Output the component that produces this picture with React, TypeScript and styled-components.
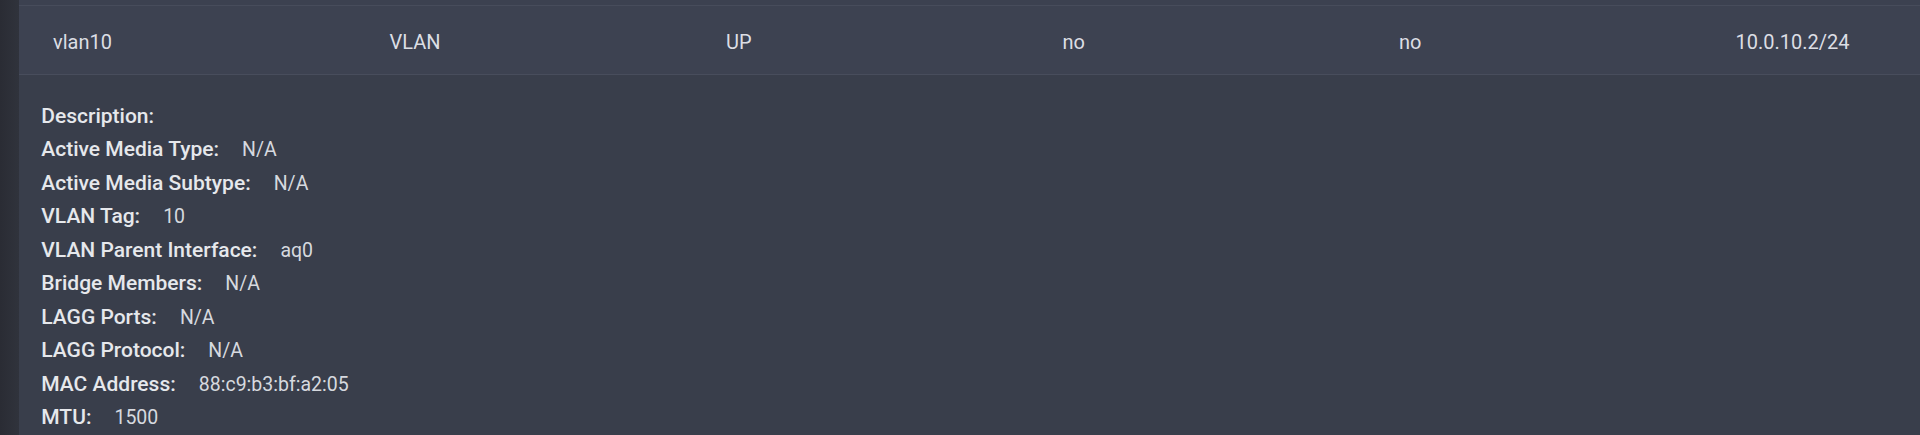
import React from "react";
import styled, { createGlobalStyle } from "styled-components";

const GlobalStyle = createGlobalStyle`
  html, body {
    margin: 0;
    padding: 0;
    background: #393e4b;
  }
  body {
    font-family: Roboto, "Noto Sans", "Liberation Sans", sans-serif;
    -webkit-font-smoothing: antialiased;
  }
`;

const Page = styled.div`
  display: flex;
  width: 1920px;
  height: 435px;
  overflow: hidden;
`;

const SideStrip = styled.div`
  flex: 0 0 19px;
  background: linear-gradient(90deg, #2a2c34 0%, #30333c 100%);
`;

const Main = styled.div`
  flex: 1;
  display: flex;
  flex-direction: column;
  min-width: 0;
  background: #393e4b;
`;

const PrevRowEdge = styled.div`
  height: 5px;
  background: #3c4150;
  border-bottom: 1px solid #474c5b;
`;

const Row = styled.div`
  display: grid;
  grid-template-columns: repeat(6, 336.5px);
  height: 69px;
  box-sizing: border-box;
  padding: 24px 0 21px 34px;
  background: #3d4251;
  border-bottom: 1px solid #484d5c;
`;

const Cell = styled.div`
  font-size: 20px;
  line-height: 24px;
  font-weight: 400;
  color: #dcdee4;
  white-space: nowrap;
`;

const Details = styled.div`
  display: flex;
  flex-direction: column;
  padding: 24.9px 0 0 22.3px;
`;

const DetailLine = styled.div`
  display: flex;
  align-items: baseline;
  height: 33.56px;
  line-height: 33.56px;
  white-space: nowrap;
`;

const Label = styled.span`
  font-size: 21px;
  font-weight: 500;
  color: #e6e8ec;
`;

const Value = styled.span`
  font-size: 19.5px;
  font-weight: 400;
  color: #d6d9df;
  margin-left: 23px;
`;

const rowCells = ["vlan10", "VLAN", "UP", "no", "no", "10.0.10.2/24"];

const details: [string, string][] = [
  ["Description:", ""],
  ["Active Media Type:", "N/A"],
  ["Active Media Subtype:", "N/A"],
  ["VLAN Tag:", "10"],
  ["VLAN Parent Interface:", "aq0"],
  ["Bridge Members:", "N/A"],
  ["LAGG Ports:", "N/A"],
  ["LAGG Protocol:", "N/A"],
  ["MAC Address:", "88:c9:b3:bf:a2:05"],
  ["MTU:", "1500"],
];

export default function App() {
  return (
    <>
      <GlobalStyle />
      <Page>
        <SideStrip />
        <Main>
          <PrevRowEdge />
          <Row>
            {rowCells.map((c, i) => (
              <Cell key={i}>{c}</Cell>
            ))}
          </Row>
          <Details>
            {details.map(([l, v]) => (
              <DetailLine key={l}>
                <Label>{l}</Label>
                {v && <Value>{v}</Value>}
              </DetailLine>
            ))}
          </Details>
        </Main>
      </Page>
    </>
  );
}
